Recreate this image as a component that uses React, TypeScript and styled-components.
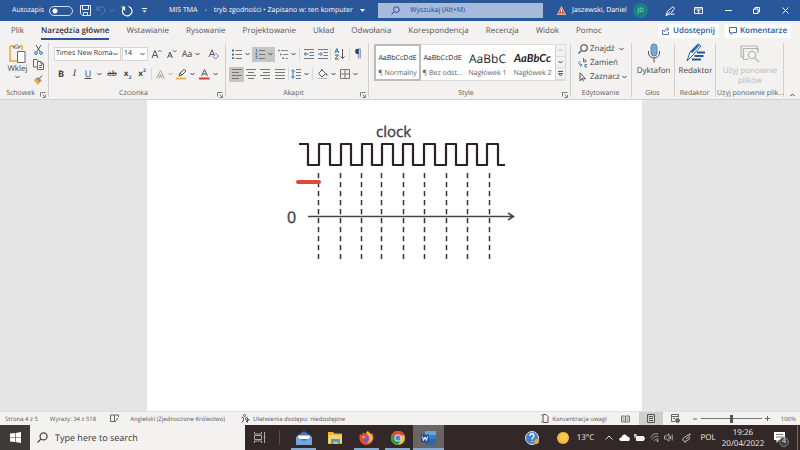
import React from 'react';
import styled, { createGlobalStyle, css } from 'styled-components';

const GlobalStyle = createGlobalStyle`
  *, *::before, *::after { box-sizing: border-box; }
  body { margin: 0; background: #e5e5e5; color: #444; font: 8px/12px "Open Sans", "Noto Sans", sans-serif; text-rendering: geometricPrecision; }
  button, input, select { font: inherit; color: inherit; margin: 0; padding: 0; border: 0; background: none; border-radius: 0; text-rendering: inherit; }
  button { white-space: nowrap; }
  svg { display: block; flex: none; }
`;

const Shell = styled.div`
  min-height: 100vh;
  display: flex;
  flex-direction: column;
  overflow: hidden;
`;

/* ---------- title bar ---------- */
const TitleBar = styled.header`
  display: flex;
  align-items: center;
  height: 21px;
  padding: 0 0 0 12px;
  background: #2a579a;
  color: #fff;
  font-size: 7px;
  white-space: nowrap;
`;
const AutoSave = styled.label`
  display: flex;
  align-items: center;
  justify-content: space-between;
  width: 61px;
  margin-right: 7px;
`;
const Toggle = styled.input`
  appearance: none;
  width: 24px;
  height: 10px;
  margin: 0;
  border: 1px solid #d5dfee;
  border-radius: 5px;
  background: radial-gradient(circle at 5px 4px, #fff 2px, transparent 3px);
`;
const TitleButton = styled.button<{ $w: number }>`
  display: flex;
  align-items: center;
  justify-content: center;
  flex: none;
  width: ${(p) => p.$w}px;
  height: 21px;
`;
const DocName = styled.div`
  display: flex;
  align-items: center;
  gap: 7px;
  width: 209px;
  margin-left: 15px;
`;
const TitleSearch = styled.label`
  display: flex;
  align-items: center;
  flex: 1;
  gap: 10px;
  height: 15px;
  padding-left: 13px;
  background: #a6bbdb;
  color: #2a4f8c;
  input { flex: 1; min-width: 0; }
  input::placeholder { color: #24488a; opacity: 1; }
`;
const Account = styled.button`
  display: flex;
  align-items: center;
  gap: 6px;
  margin: 0 10px 0 14px;
  width: 91px;
`;
const Avatar = styled.span`
  width: 15px;
  height: 15px;
  margin-left: auto;
  border-radius: 50%;
  background: #168484;
  color: #b5dede;
  font-size: 6px;
  line-height: 15px;
`;

/* ---------- tabs ---------- */
const TabBar = styled.nav`
  display: flex;
  align-items: center;
  height: 20px;
  padding: 0 9px 0 11px;
  background: #f3f2f1;
`;
const TabList = styled.div`
  display: flex;
  flex: 1;
  gap: 17px;
`;
const Tab = styled.button<{ $active?: boolean }>`
  height: 17px;
  padding-top: 2px;
  border-bottom: 2px solid ${(p) => (p.$active ? '#2a579a' : 'transparent')};
  color: ${(p) => (p.$active ? '#333' : '#555')};
  font-weight: ${(p) => (p.$active ? 600 : 400)};
`;
const ShareButton = styled.button`
  display: flex;
  align-items: center;
  justify-content: center;
  gap: 3px;
  height: 14px;
  margin-left: 6px;
  padding: 0 4px;
  background: #fff;
  color: #2a579a;
  font-weight: 600;
`;

/* ---------- ribbon ---------- */
const Ribbon = styled.section`
  display: flex;
  height: 59px;
  background: #f3f2f1;
  border-bottom: 1px solid #d2d0ce;
`;
const Group = styled.div<{ $w: number; $grow?: boolean }>`
  display: flex;
  flex-direction: column;
  flex: ${(p) => (p.$grow ? 1 : 0)} 0 ${(p) => p.$w}px;
  min-width: 0;
  height: 58px;
  padding-top: 1px;
  background: linear-gradient(#d2d0ce, #d2d0ce) right center / 1px 54px no-repeat;
`;
const GroupBody = styled.div<{ $pad?: number; $row?: boolean }>`
  flex: 1;
  display: flex;
  flex-direction: ${(p) => (p.$row ? 'row' : 'column')};
  gap: ${(p) => (p.$row ? 0 : 6)}px;
  padding: ${(p) => (p.$row ? 0 : 5)}px 0 0 ${(p) => p.$pad ?? 4}px;
`;
const GroupFooter = styled.div`
  display: flex;
  align-items: flex-end;
  height: 10px;
  padding: 0 3px 1px 1px;
  font-size: 7px;
  line-height: 8px;
  color: #605e5c;
  white-space: nowrap;
  span { flex: 1; min-width: 0; text-align: center; }
`;
const Row = styled.div`
  display: flex;
  align-items: center;
  height: 14px;
`;
const Tool = styled.button<{ $w: number; $on?: boolean }>`
  display: flex;
  align-items: center;
  justify-content: center;
  gap: 3px;
  flex: none;
  width: ${(p) => p.$w}px;
  height: 15px;
  ${(p) => p.$on && css`background: #c8c6c4;`}
`;
const Divider = styled.i<{ $m: number }>`
  width: 1px;
  height: 13px;
  margin: 0 ${(p) => p.$m}px;
  background: #dad8d6;
`;
const Combo = styled.div<{ $w: number }>`
  display: flex;
  align-items: center;
  width: ${(p) => p.$w}px;
  height: 14px;
  margin-right: 1px;
  padding: 0 2px 0 1px;
  background: #fff;
  border: 1px solid #d8d6d4;
  select { appearance: none; flex: 1; min-width: 0; width: 0; font-size: 7px; color: #333; }
`;
const Glyph = styled.span<{ $kind?: 'bold' | 'italic' | 'under' | 'strike'; $size?: number }>`
  font-size: ${(p) => p.$size ?? 9}px;
  color: #444;
  ${(p) => p.$kind === 'bold' && css`font-weight: 700;`}
  ${(p) => p.$kind === 'italic' && css`font-style: italic; font-family: "Liberation Serif", serif;`}
  ${(p) => p.$kind === 'under' && css`text-decoration: underline;`}
  ${(p) => p.$kind === 'strike' && css`text-decoration: line-through;`}
  sub, sup { font-size: 5px; line-height: 0; color: #2a6fc0; }
`;
const Paste = styled.button`
  display: flex;
  flex-direction: column;
  align-items: center;
  width: 27px;
  height: 42px;
  padding-top: 2px;
`;
const Stack = styled.div`
  display: flex;
  flex-direction: column;
  align-items: flex-start;
`;
const BigTool = styled.button<{ $off?: boolean }>`
  display: flex;
  flex-direction: column;
  align-items: center;
  gap: 3px;
  width: 100%;
  height: 42px;
  padding-top: 1px;
  line-height: 10px;
  color: ${(p) => (p.$off ? '#bab8b6' : '#444')};
`;
const EditTool = styled.button`
  display: flex;
  align-items: center;
  gap: 2px;
  height: 14px;
  line-height: 14px;
`;
const Collapse = styled.button`
  flex: none;
  width: 16px;
  display: flex;
  align-items: flex-end;
  justify-content: center;
  padding-bottom: 2px;
`;

const Gallery = styled.div`
  display: flex;
  height: 37px;
  margin: 2px 5px 0 5px;
  background: #fff;
  border: 1px solid #dddbd9;
`;
const StyleCard = styled.button<{ $on?: boolean }>`
  flex: 1;
  min-width: 0;
  overflow: hidden;
  display: flex;
  flex-direction: column;
  align-items: center;
  justify-content: flex-end;
  gap: 1px;
  font-size: 7px;
  line-height: 12px;
  color: #605e5c;
  outline: ${(p) => (p.$on ? '2px solid #bebcba' : 'none')};
  outline-offset: -1px;
`;
const Sample = styled.span<{ $size: number; $italic?: boolean }>`
  font-family: ${(p) => (p.$italic ? 'Lato' : '"Open Sans"')}, sans-serif;
  font-size: ${(p) => p.$size}px;
  font-style: ${(p) => (p.$italic ? 'italic' : 'normal')};
  font-weight: ${(p) => (p.$italic ? 700 : 400)};
  line-height: 16px;
  color: #222;
`;
const GalleryScroll = styled.div`
  width: 10px;
  display: flex;
  flex-direction: column;
  background: #f3f2f1;
  border-left: 1px solid #d2d0ce;
  button { flex: 1; display: flex; align-items: center; justify-content: center; border-bottom: 1px solid #dddbd9; }
`;

/* ---------- document ---------- */
const Workspace = styled.main`
  flex: 1;
  display: flex;
  justify-content: center;
  padding-right: 11px;
  background: #e5e5e5;
`;
const Page = styled.article`
  width: 495px;
  max-width: 100%;
  padding: 20px 0 0 134px;
  background: #fff;
`;

/* ---------- status bar ---------- */
const StatusBar = styled.footer`
  display: flex;
  align-items: center;
  height: 14px;
  padding: 0 4px 0 5px;
  background: #f3f2f1;
  border-top: 1px solid #e1dfdd;
  color: #555;
  font-size: 6px;
  white-space: nowrap;
`;
const StatusItem = styled.button<{ $gap?: number; $on?: boolean; $w?: number }>`
  display: flex;
  align-items: center;
  justify-content: center;
  gap: 3px;
  height: 14px;
  width: ${(p) => (p.$w ? p.$w + 'px' : 'auto')};
  margin-right: ${(p) => p.$gap ?? 0}px;
  background: ${(p) => (p.$on ? '#d0cecc' : 'transparent')};
`;
const Spacer = styled.div`
  flex: 1;
`;
const Zoom = styled.input`
  appearance: none;
  width: 61px;
  height: 8px;
  background: linear-gradient(#777, #777) center / 100% 1px no-repeat;
  &::-webkit-slider-thumb { appearance: none; width: 3px; height: 8px; background: #555; }
`;

/* ---------- taskbar ---------- */
const Taskbar = styled.footer`
  display: flex;
  align-items: center;
  height: 25px;
  background: #332828;
  color: #eee;
`;
const StartButton = styled.button`
  display: flex;
  align-items: center;
  justify-content: center;
  width: 30px;
  height: 25px;
  background: #3f3a3a;
`;
const TaskSearch = styled.label`
  display: flex;
  align-items: center;
  gap: 7px;
  width: 215px;
  height: 25px;
  padding-left: 7px;
  background: #f3f2f1;
  color: #333;
  input { flex: 1; min-width: 0; font-size: 9px; }
  input::placeholder { color: #333; opacity: 1; }
`;
const TaskButton = styled.button<{ $w: number; $run?: boolean; $on?: boolean }>`
  display: flex;
  align-items: center;
  justify-content: center;
  flex: none;
  width: ${(p) => p.$w}px;
  height: 25px;
  background: ${(p) => (p.$on ? '#6a6562' : 'transparent')};
  background-image: ${(p) => (p.$run ? 'linear-gradient(#86a9cf, #86a9cf)' : 'none')};
  background-size: ${(p) => (p.$on ? '100%' : '25px')} 2px;
  background-position: bottom;
  background-repeat: no-repeat;
`;
const TaskDivider = styled.i`
  width: 1px;
  height: 15px;
  margin: 0 8px 0 5px;
  background: #554d4a;
`;
const Clock = styled.button`
  flex: none;
  width: 48px;
  line-height: 11px;
`;
const Notify = styled.button`
  position: relative;
  flex: none;
  width: 30px;
  height: 25px;
  padding-right: 4px;
  display: flex;
  align-items: center;
  justify-content: center;
`;
const Badge = styled.span`
  position: absolute;
  right: 8px;
  bottom: 3px;
  width: 10px;
  height: 10px;
  border-radius: 50%;
  background: #454040;
  border: 1px solid #817b79;
  font-size: 7px;
  line-height: 8px;
`;
const DesktopEdge = styled.i`
  width: 3px;
  height: 25px;
  border-left: 1px solid #746c6a;
`;

/* ---------- icons ---------- */
type IconProps = { w: number; h?: number; c?: string; sw?: number; children: React.ReactNode };
const Icon = ({ w, h = w, c = '#555', sw = 1, children }: IconProps) => (
  <svg width={w} height={h} viewBox={`0 0 ${w} ${h}`} fill="none" stroke={c} strokeWidth={sw} aria-hidden="true">
    {children}
  </svg>
);
const Chevron = ({ c = '#444', up = false }: { c?: string; up?: boolean }) => (
  <Icon w={5} h={4} c={c}><path d={up ? 'M.5 3 2.5 1l2 2' : 'M.5 1l2 2 2-2'} /></Icon>
);
const Launcher = () => (
  <Icon w={6} c="#666" sw={0.8}><path d="M.5 4.5v-4h5M2.5 2.5l2.5 2.5M5.4 2.5v3h-3" /></Icon>
);
const Magnifier = ({ size = 9, c = '#444' }: { size?: number; c?: string }) => (
  <svg width={size} height={size} viewBox="0 0 10 10" fill="none" stroke={c} strokeWidth="1.1" aria-hidden="true">
    <circle cx="6" cy="4" r="3.2" /><path d="M3.6 6.4.5 9.5" />
  </svg>
);
const Lines = ({ kind }: { kind: 'left' | 'center' | 'right' | 'justify' }) => {
  const d = {
    left: 'M0 .5h10M0 3.5h7M0 6.5h10M0 9.5h7',
    center: 'M0 .5h10M2 3.5h6M0 6.5h10M2 9.5h6',
    right: 'M0 .5h10M3 3.5h7M0 6.5h10M3 9.5h7',
    justify: 'M0 .5h10M0 3.5h10M0 6.5h10M0 9.5h10',
  }[kind];
  return <Icon w={10} c="#777"><path d={d} /></Icon>;
};
const ListIcon = () => (
  <Icon w={10}><path d="M3.5 1.5H10M3.5 5.5H10M3.5 9.5H10" stroke="#777" /><path d="M0 1.5h2M0 5.5h2M0 9.1h2" stroke="#2f73bd" strokeWidth="1.8" /></Icon>
);
const NumberIcon = () => (
  <Icon w={10}><path d="M4 1.5h6M4 5.5h6M4 9.5h6" stroke="#777" /><path d="M1.5 0v2.6M.5 4h1.5L.8 6H2M.5 7.5h1.5v2H.5" stroke="#2f73bd" strokeWidth=".8" /></Icon>
);
const MultiIcon = () => (
  <Icon w={10}><path d="M3 1.5h7M5 5.5h5M7.5 9.5H10" stroke="#888" /><path d="M0 1.5h1.6M2 5.5h1.6M4.5 9.2h1.6" stroke="#2f73bd" strokeWidth="1.6" /></Icon>
);
const IndentIcon = ({ right }: { right?: boolean }) => (
  <Icon w={10}>
    <path d="M0 .5h10M5.5 3.5H10M5.5 6.5H10M0 9.5h10" stroke="#777" />
    <path d={right ? 'M0 5h4M2.5 3.2 4.3 5 2.5 6.8' : 'M.5 5h4M2 3.2.3 5 2 6.8'} stroke="#2f73bd" />
  </Icon>
);

/* ---------- timing diagram ---------- */
const ticks = [318, 340, 361, 381, 403, 424, 446, 467, 489];
const pulses = [[319, 330], [341, 351], [362, 372], [382, 393], [403, 413], [424, 435], [446, 456], [467, 477], [487, 498]];
const wave = 'M299 144H308V165' + pulses.map(([up, down]) => `H${up}V144H${down}V165`).join('') + 'H505';

const TimingDiagram = () => (
  <svg width="240" height="145" viewBox="281 120 240 145" role="img" aria-label="clock">
    <text x="376" y="137" fontSize="15" fontFamily="Open Sans, sans-serif" fill="#444" stroke="#444" strokeWidth=".4">clock</text>
    <path d={wave} fill="none" stroke="#2c2226" strokeWidth="2.2" strokeLinejoin="round" />
    {ticks.map((x) => (
      <path key={x} d={`M${x + 0.5} 173V259`} stroke="#3a3438" strokeWidth="1.5" strokeDasharray="5.3 3.7" />
    ))}
    <path d="M298 182h21" stroke="#dc4b3c" strokeWidth="4" strokeLinecap="round" />
    <path d="M308 216.5h205M508 213l5.5 3.5-5.5 3.5" fill="none" stroke="#444" strokeWidth="1.5" />
    <text x="287" y="223" fontSize="16" fontFamily="Open Sans, sans-serif" fill="#444" stroke="#444" strokeWidth=".4">0</text>
  </svg>
);

const tabs = ['Plik', 'Narzędzia główne', 'Wstawianie', 'Rysowanie', 'Projektowanie', 'Układ', 'Odwołania', 'Korespondencja', 'Recenzja', 'Widok', 'Pomoc'];

const Footer = ({ label, launch }: { label: string; launch?: boolean }) => (
  <GroupFooter><span>{label}</span>{launch && <Launcher />}</GroupFooter>
);

export default function App() {
  return (
    <Shell>
      <GlobalStyle />
      <TitleBar>
        <AutoSave>Autozapis<Toggle type="checkbox" /></AutoSave>
        <TitleButton $w={11} aria-label="Zapisz">
          <Icon w={11} c="#e6ecf5"><path d="M.5.5h10v10h-8l-2-2zM2.5.5v4h6v-4M3.5 10.5v-3h4v3" /></Icon>
        </TitleButton>
        <TitleButton $w={28} aria-label="Cofnij">
          <Icon w={19} h={11} c="#5b80b8"><path d="M1 1v4h4M1.500 4.500C3 2 6 1 8 3s1 4-3 7.500M14 4.500l2 2 2-2" /></Icon>
        </TitleButton>
        <TitleButton $w={16} aria-label="Ponów">
          <Icon w={12} c="#fff" sw={1.2}><path d="M7.500 1.500A4.800 4.800 0 1 1 3 2.500M3.500 5.500v-3.500H.5" /></Icon>
        </TitleButton>
        <TitleButton $w={19} aria-label="Dostosuj">
          <Icon w={5} h={5} c="#fff"><path d="M0 .5h5" /><path d="M.5 2.500h4l-2 2z" fill="#fff" stroke="none" /></Icon>
        </TitleButton>
        <DocName><span>MIS TMA</span><span>-</span><span>tryb zgodności • Zapisano w: ten komputer</span>
          <Icon w={5} h={3} c="none"><path d="M0 0h5L2.500 3z" fill="#fff" /></Icon>
        </DocName>
        <TitleSearch><Magnifier size={9} c="#24488a" /><input aria-label="Wyszukaj" placeholder="Wyszukaj (Alt+M)" /></TitleSearch>
        <Account>
          <Icon w={9} c="none"><path d="M4.500 0 9 9H0z" fill="#f3eee8" /><path d="M4.500 1 8 8.500H1z" fill="#dd5a33" /><path d="M4.500 3v3M4.500 7v1" stroke="#fff" /></Icon>
          Jaszewski, Daniel<Avatar>JD</Avatar>
        </Account>
        <TitleButton $w={24} aria-label="Pióro">
          <Icon w={10} c="#fff" sw={0.9}><path d="M1 9.500 2.500 5 8 .8l1.500 1.500L6 7.500zM1 9.500l4-4M6 8.500l3.500-.5" /></Icon>
        </TitleButton>
        <TitleButton $w={32} aria-label="Opcje wstążki">
          <Icon w={9} h={7} c="#fff" sw={0.9}><path d="M.5.5h8v6h-8zM.5 2h8M4.500 6V3M3 4.300 4.500 3 6 4.300" /></Icon>
        </TitleButton>
        <TitleButton $w={28} aria-label="Minimalizuj"><Icon w={7} c="#fff"><path d="M0 3.500h7" /></Icon></TitleButton>
        <TitleButton $w={28} aria-label="Przywróć"><Icon w={7} c="#fff"><path d="M.5 2h4.500v4.500H.5zM2 2V.5h4.500V5H5" /></Icon></TitleButton>
        <TitleButton $w={30} aria-label="Zamknij"><Icon w={7} c="#fff"><path d="M.5.5l6 6M6.500.5l-6 6" /></Icon></TitleButton>
      </TitleBar>

      <TabBar>
        <TabList>
          {tabs.map((t, i) => <Tab key={t} $active={i === 1}>{t}</Tab>)}
        </TabList>
        <ShareButton><Icon w={8} c="#2a579a" sw={0.8}><path d="M2 3.500H.5v4h6V5M2.500 5c0-2 1-3 3-3M4.500.5l2.500 1.700L4.500 4" /></Icon>Udostępnij</ShareButton>
        <ShareButton><Icon w={8} c="#2a579a" sw={0.9}><path d="M.5.5h7v5h-4l-1.500 2v-2H.5z" /></Icon>Komentarze</ShareButton>
      </TabBar>

      <Ribbon>
        <Group $w={49}>
          <GroupBody $pad={4} $row>
            <Paste>
              <Icon w={17} h={19}>
                <path d="M1 2h4M11 2h2v4M1 2v15h7" stroke="#eaa637" strokeWidth="1.4" />
                <path d="M4.500 4V2.500H6c0-2.500 3-2.500 3 0h1.500V4z" fill="#f3f2f1" stroke="#777" />
                <path d="M8.500 7.500h7.500v11H8.500z" fill="#fff" stroke="#666" />
              </Icon>
              Wklej<Chevron />
            </Paste>
            <Stack>
              <Tool $w={14} aria-label="Wytnij"><Icon w={9} h={10}><path d="M2 0l4 6.500M7 0 3 6.500" /><circle cx="2" cy="8" r="1.4" stroke="#2f73bd" /><circle cx="7" cy="8" r="1.4" stroke="#2f73bd" /></Icon></Tool>
              <Tool $w={14} aria-label="Kopiuj"><Icon w={11} h={11} sw={0.9}><path d="M4 8H.5V.5H4L5.500 2" /><path d="M4.500 2.500h3.500l2.500 2.500v5.500h-6zM8 2.500V5h2.500M6 6.500h3M6 8.500h3" fill="#fff" /></Icon></Tool>
              <Tool $w={14} aria-label="Malarz formatów"><Icon w={10}><path d="M1 5l3-1.500 3 3L5 9.500z" fill="#efb13f" stroke="#e09a25" strokeWidth=".6" /><path d="M4 3.500l1-1 3 3-1 1zM6.500 3.500l2.500-3" stroke="#555" /></Icon></Tool>
            </Stack>
          </GroupBody>
          <Footer label="Schowek" launch />
        </Group>

        <Group $w={177}>
          <GroupBody $pad={5}>
            <Row>
              <Combo $w={67}><select aria-label="Czcionka"><option>Times New Roma</option></select><Chevron /></Combo>
              <Combo $w={26}><select aria-label="Rozmiar"><option>14</option></select><Chevron /></Combo>
              <Tool $w={15} aria-label="Powiększ"><Icon w={11} h={11}><path d="M1 9 4 1.500 7 9M2.200 6.500h3.700" /><path d="M7 3l1.800-1.800L10.600 3" stroke="#2f73bd" /></Icon></Tool>
              <Tool $w={15} aria-label="Zmniejsz"><Icon w={11} h={11}><path d="M1.500 9 4 3 6.500 9M2.500 7h3" /><path d="M7 1.200 8.700 3l1.800-1.800" stroke="#2f73bd" /></Icon></Tool>
              <Tool $w={24}><Glyph>Aa</Glyph><Chevron /></Tool>
              <Tool $w={22} aria-label="Wyczyść"><Icon w={12} h={11}><path d="M1 8 4 .8 6 6M2 5.500h3.500" /><path d="M5 7.500 8 4.500l2.500 2.500-3 3z" fill="#fff" stroke="#9557ba" /></Icon></Tool>
            </Row>
            <Row>
              <Tool $w={14}><Glyph $kind="bold">B</Glyph></Tool>
              <Tool $w={13}><Glyph $kind="italic" $size={10}>I</Glyph></Tool>
              <Tool $w={14}><Glyph $kind="under">U</Glyph></Tool>
              <Tool $w={9} aria-label="Podkreślenia"><Chevron /></Tool>
              <Tool $w={16}><Glyph $kind="strike" $size={8}>ab</Glyph></Tool>
              <Tool $w={15}><Glyph $kind="bold" $size={8}>x<sub>2</sub></Glyph></Tool>
              <Tool $w={14}><Glyph $kind="bold" $size={8}>x<sup>2</sup></Glyph></Tool>
              <Divider $m={2} />
              <Tool $w={20} aria-label="Efekty"><Icon w={9} c="#a9a7a5"><path d="M.5 8.500 4.500.5l4 8M2.500 6h4M3 8.500l1.500-4 1.500 4" /></Icon><Chevron c="#aaa" /></Tool>
              <Tool $w={22} aria-label="Wyróżnienie"><Icon w={11} h={11}><path d="M0 9.500h10" stroke="#f3b82d" strokeWidth="2" /><path d="M3 7l1-3L8 .5 10 2 6 6zM4 4l2 2" /></Icon><Chevron /></Tool>
              <Tool $w={24} aria-label="Kolor czcionki"><Icon w={11} h={11}><path d="M2.500 7 5.500.5l3 6.500M3.500 5h4" /><path d="M0 9.500h10.500" stroke="#d83b31" strokeWidth="2" /></Icon><Chevron /></Tool>
            </Row>
          </GroupBody>
          <Footer label="Czcionka" launch />
        </Group>

        <Group $w={143}>
          <GroupBody $pad={3}>
            <Row>
              <Tool $w={23} aria-label="Punktory"><ListIcon /><Chevron /></Tool>
              <Tool $w={23} $on aria-label="Numerowanie"><NumberIcon /><Chevron /></Tool>
              <Tool $w={23} aria-label="Lista wielopoziomowa"><MultiIcon /><Chevron /></Tool>
              <Divider $m={1} />
              <Tool $w={15} aria-label="Zmniejsz wcięcie"><IndentIcon /></Tool>
              <Tool $w={14} aria-label="Zwiększ wcięcie"><IndentIcon right /></Tool>
              <Divider $m={0} />
              <Tool $w={17} aria-label="Sortuj"><Icon w={11} h={12}><path d="M.8 5 2.800.5 4.800 5M1.500 3.500h2.600" stroke="#2f73bd" /><path d="M1 7h3.500L1 11h3.800M8.500 1v9.500M6.500 8.500l2 2 2-2" /></Icon></Tool>
              <Divider $m={1} />
              <Tool $w={14}><Glyph $size={11}>¶</Glyph></Tool>
            </Row>
            <Row>
              <Tool $w={15} $on aria-label="Do lewej"><Lines kind="left" /></Tool>
              <Tool $w={14} aria-label="Do środka"><Lines kind="center" /></Tool>
              <Tool $w={14} aria-label="Do prawej"><Lines kind="right" /></Tool>
              <Tool $w={15} aria-label="Wyjustuj"><Lines kind="justify" /></Tool>
              <Divider $m={1} />
              <Tool $w={20} aria-label="Interlinia"><Icon w={10}><path d="M5 .5h5M5 3.500h5M5 6.500h5M5 9.500h5" stroke="#777" /><path d="M2 .8v8.400M.3 2.500 2 .8l1.700 1.700M.3 7.500 2 9.200l1.700-1.700" stroke="#2f73bd" /></Icon><Chevron /></Tool>
              <Divider $m={2} />
              <Tool $w={23} aria-label="Cieniowanie"><Icon w={11} h={11}><path d="M1.500 4.500 5 1l3.500 3.500L5 8zM5 1V0" fill="#fff" /><path d="M9 4.500l1 2" stroke="#2f73bd" strokeWidth="1.6" /><path d="M.5 9.500h9.500" stroke="#bbb" /></Icon><Chevron /></Tool>
              <Tool $w={22} aria-label="Obramowania"><Icon w={10} c="#777"><path d="M.5.5h9v9h-9zM5 .5v9M.5 5h9" /></Icon><Chevron /></Tool>
            </Row>
          </GroupBody>
          <Footer label="Akapit" launch />
        </Group>

        <Group $w={202} $grow>
          <Gallery>
            <StyleCard $on><Sample $size={7}>AaBbCcDdE</Sample>¶ Normalny</StyleCard>
            <StyleCard><Sample $size={7}>AaBbCcDdE</Sample>¶ Bez odst...</StyleCard>
            <StyleCard><Sample $size={12}>AaBbC</Sample>Nagłówek 1</StyleCard>
            <StyleCard><Sample $size={11} $italic>AaBbCc</Sample>Nagłówek 2</StyleCard>
            <GalleryScroll>
              <button aria-label="W górę"><Chevron up c="#bbb" /></button>
              <button aria-label="W dół"><Chevron /></button>
              <button aria-label="Więcej"><Icon w={5} h={6}><path d="M0 .5h5M.5 2.500h4l-2 2.500z" /></Icon></button>
            </GalleryScroll>
          </Gallery>
          <Spacer />
          <Footer label="Style" launch />
        </Group>

        <Group $w={61}>
          <GroupBody $pad={7} $row>
            <Stack>
              <EditTool><Magnifier size={10} />Znajdź<span /><Chevron /></EditTool>
              <EditTool><Icon w={10}><path d="M5.500 0v4h2.300V2H5.500" strokeWidth=".8" /><path d="M2.500 3.500C0 4 0 7 3.500 7M2.300 5.500 4 7 2.300 8.500" stroke="#2f73bd" strokeWidth=".9" /><path d="M9 6.500H7v2.500h2" stroke="#2f73bd" /></Icon>Zamień</EditTool>
              <EditTool><Icon w={10}><path d="M2 .8v8l2-2 1.500 2.500M4 6.800h3.500L2 .8" /></Icon>Zaznacz<Chevron /></EditTool>
            </Stack>
          </GroupBody>
          <Footer label="Edytowanie" />
        </Group>

        <Group $w={43}>
          <BigTool>
            <Icon w={14} h={20}><rect x="4" y="1" width="6" height="12" rx="3" fill="#79a7d8" stroke="#5885b5" /><path d="M1.500 8v2c0 6.500 11 6.500 11 0V8M7 15v4.500" /></Icon>
            Dyktafon
          </BigTool>
          <Spacer /><Footer label="Głos" />
        </Group>
        <Group $w={41}>
          <BigTool>
            <Icon w={20} h={20}><path d="M1 18 4 9 12 .8 15 3 7 12z" fill="#fff" stroke="#235f9e" /><path d="M4 9l8-7.500 1.500 1L6.500 10z" fill="#2a67aa" stroke="none" /><path d="M11 9.500h8M8.500 13h9M6 16.500h9" stroke="#2a579a" strokeWidth="2" /></Icon>
            Redaktor
          </BigTool>
          <Spacer /><Footer label="Redaktor" />
        </Group>
        <Group $w={68}>
          <BigTool $off>
            <Icon w={20} h={20} c="#b5b3b1" sw={1.2}><path d="M3 14H1V3h16v4M3.500 17V5.500H18V10M3.500 16.500h5" /><circle cx="12" cy="12" r="3.7" /><path d="M14.700 14.700 19 19" /></Icon>
            <span>Użyj ponownie<br />plików</span>
          </BigTool>
          <Spacer /><Footer label="Użyj ponownie plik..." />
        </Group>
        <Collapse aria-label="Zwiń wstążkę"><Chevron up /></Collapse>
      </Ribbon>

      <Workspace><Page><TimingDiagram /></Page></Workspace>

      <StatusBar>
        <StatusItem $gap={12}>Strona 4 z 5</StatusItem>
        <StatusItem $gap={14}>Wyrazy: 34 z 518</StatusItem>
        <StatusItem $gap={11} aria-label="Sprawdzanie"><Icon w={9} c="#666"><path d="M4.500 1v6.500M4.500 1H.5v6.500h4M4.500 1h4v2M5 8l3-4" /></Icon></StatusItem>
        <StatusItem $gap={16}>Angielski (Zjednoczone Królestwo)</StatusItem>
        <StatusItem><Icon w={9} c="#555"><circle cx="3.5" cy="1.5" r="1" /><path d="M.5 3l2 1v2L1 8.500M6.500 3l-2 1v1.500" /><path d="M5 6h3.500M6.500 4v4.500M5 8l3-3" /></Icon>Ułatwienia dostępu: niedostępne</StatusItem>
        <Spacer />
        <StatusItem $gap={9}><Icon w={8} h={9} c="#555"><path d="M2 .5h3l2 2v6H2zM0 2V.5M0 7v1.500" /></Icon>Koncentracja uwagi</StatusItem>
        <StatusItem $w={19} $gap={4} aria-label="Tryb odczytu"><Icon w={9} h={8} c="#777"><path d="M.5 1h3.500l.5.5.5-.5h3.500v6H.5zM4.500 1v6M1.500 3h2M1.500 5h2M5.500 3h2M5.500 5h2" /></Icon></StatusItem>
        <StatusItem $w={24} $on aria-label="Układ wydruku"><Icon w={8} h={9} c="#555"><path d="M.5.5h7v8h-7zM2 2.500h4M2 4.500h4M2 6.500h4" /></Icon></StatusItem>
        <StatusItem $w={26} $gap={4} aria-label="Układ sieci Web"><Icon w={9} c="#666"><path d="M4 7.500H.5v-7h7v3M1 2.500h6M2 4.500h2" /><circle cx="6.5" cy="6.5" r="2" fill="#666" /></Icon></StatusItem>
        <StatusItem $gap={4} aria-label="Pomniejsz"><Icon w={4} c="#666"><path d="M0 2h4" /></Icon></StatusItem>
        <Zoom type="range" aria-label="Powiększenie" defaultValue={50} />
        <StatusItem $gap={9} aria-label="Powiększ"><Icon w={10} h={5} c="#666"><path d="M3 2.500h5M5.500 0v5" /></Icon></StatusItem>
        <StatusItem>100%</StatusItem>
      </StatusBar>

      <Taskbar>
        <StartButton aria-label="Start"><Icon w={11} h={11} c="none"><path d="M0 1.500 5 1v4.200H0zM5.600.9 11 0v5.200H5.600zM0 5.800h5V10l-5-.5zM5.600 5.800H11V11l-5.400-.9z" fill="#fff" /></Icon></StartButton>
        <TaskSearch><Magnifier size={11} /><input aria-label="Type here to search" placeholder="Type here to search" /></TaskSearch>
        <TaskButton $w={29} aria-label="Task view"><Icon w={12} h={11} c="#aaa"><path d="M.5 0v2h7V0M.5 3.500h7v4h-7zM.5 11V9h7v2M10.500 0v11M9.500 5h2" /></Icon></TaskButton>
        <TaskDivider />
        <TaskButton $w={31} $run aria-label="Mail"><Icon w={16} h={14} c="none"><path d="M0 5.500 8 0l8 5.500V14H0z" fill="#4472a8" /><path d="M2 4.500h12V8H2z" fill="#fff" /><path d="M0 5.500 8 10l8-4.500V14H0z" fill="#72a7dc" /></Icon></TaskButton>
        <TaskButton $w={31} aria-label="Eksplorator plików"><Icon w={14} h={12} c="none"><path d="M0 0h5l1.500 1.500H14V12H0z" fill="#efb33c" /><path d="M1 3h13v8H0z" fill="#f8d36d" /><path d="M3 12V7h9v5H9.500v-2h-4v2z" fill="#5697d0" /></Icon></TaskButton>
        <TaskButton $w={32} $run aria-label="Firefox"><Icon w={15} h={14} c="none"><path d="M1 3l2 1 1-3 2 2 3-3c1 2 2 2 3 3l1.500-1C16 8 13 14 7.500 14 2 14-1 8 1 3z" fill="#e94a37" /><path d="M7 1.500 9 0c1 2 3 2 4.500 5S12 12 8 12c3-3 2-7-1-10.500z" fill="#f5b83b" /><circle cx="7" cy="7.5" r="3.2" fill="#8255c5" /><path d="M3 5h4L5.500 7.500 3 7z" fill="#f29b2d" /></Icon></TaskButton>
        <TaskButton $w={31} $run aria-label="Chrome"><Icon w={14} c="none"><circle cx="7" cy="7" r="7" fill="#f3bf3b" /><path d="M7 7 .9 3.500A7 7 0 0 1 13.100 3.500z" fill="#e24a39" /><path d="M7 7 .9 3.500A7 7 0 0 0 7 14l3-5z" fill="#359650" /><circle cx="7" cy="7" r="3.5" fill="#fff" /><circle cx="7" cy="7" r="2.7" fill="#5285d3" /></Icon></TaskButton>
        <TaskButton $w={31} $run $on aria-label="Word"><Icon w={15} h={14} c="none"><path d="M4 0h11v14H4z" fill="#2e65ae" /><path d="M4 0h11v4H4z" fill="#65a5df" /><path d="M4 4h11v4H4z" fill="#3a7bc4" /><path d="M0 3.500h8v8H0z" fill="#23539a" /><path d="M1.500 5.500 2.500 9.500 4 6l1.500 3.500 1-4" stroke="#fff" /></Icon></TaskButton>
        <Spacer />
        <TaskButton $w={48} aria-label="Pomoc"><Icon w={15} h={14} c="none"><circle cx="7" cy="7" r="6.5" fill="#4284c8" stroke="#d8e5f1" /><path d="M5 5c0-3 4-3 4 0 0 1.500-2 1.500-2 3.500M7 10v1" stroke="#fff" strokeWidth="1.3" /><path d="M9 10.500h5M11.500 8v5" stroke="#efa14c" strokeWidth="2.4" /></Icon></TaskButton>
        <TaskButton $w={14} aria-label="Pogoda"><Icon w={12} c="none"><circle cx="6" cy="6" r="6" fill="#f3b43a" /><circle cx="7" cy="5" r="4.5" fill="#f9c64b" /></Icon></TaskButton>
        <TaskButton $w={31}>13°C</TaskButton>
        <TaskButton $w={16} aria-label="Ukryte ikony"><Icon w={8} h={5} c="#ddd"><path d="M.5 4.500 4 1l3.500 3.500" /></Icon></TaskButton>
        <TaskButton $w={14} aria-label="OneDrive"><Icon w={11} h={7} c="none"><path d="M2.500 7C-1 7 0 3 2.500 3.500 3 0 7-.5 8 2.500c3-.5 4 4.500 1 4.500z" fill="#fff" /></Icon></TaskButton>
        <TaskButton $w={17} aria-label="Bateria"><Icon w={11} h={8} c="#fff"><path d="M2.500 2.500h7v4h-7z" fill="#eee" /><path d="M10.500 3.500v2M0 1h3M1 0v4" /></Icon></TaskButton>
        <TaskButton $w={13} aria-label="Wi-Fi"><Icon w={9} c="#aaa" sw={0.9}><path d="M.5 4.500A7 7 0 0 1 8 1M2 6.500A6 6 0 0 1 8.500 3.500M4 8a4 4 0 0 1 4.500-2" /><circle cx="7.5" cy="8" r=".7" fill="#ddd" /></Icon></TaskButton>
        <TaskButton $w={14} aria-label="Dźwięk"><Icon w={9} c="#aaa"><path d="M.5 3h2L5 .8v7.400L2.500 6h-2zM6.500 3v3M8.200 1.500v6" /></Icon></TaskButton>
        <TaskButton $w={22} aria-label="Pióro"><Icon w={9} h={10} c="#bbb"><path d="M.5 7 2 4.500 8 .8l.5 1L4 6M2 9l5-2.500L7.500 4M.5 7 4 9.500" /></Icon></TaskButton>
        <TaskButton $w={22}>POL</TaskButton>
        <Clock>19:26<br />20/04/2022</Clock>
        <Notify aria-label="Powiadomienia"><Icon w={12} h={13} c="none"><path d="M0 1h11v8H5l-2.500 3V9H0z" fill="#fff" /><path d="M2 3.500h7M2 6h7" stroke="#777" /></Icon><Badge>4</Badge></Notify>
        <DesktopEdge />
      </Taskbar>
    </Shell>
  );
}
